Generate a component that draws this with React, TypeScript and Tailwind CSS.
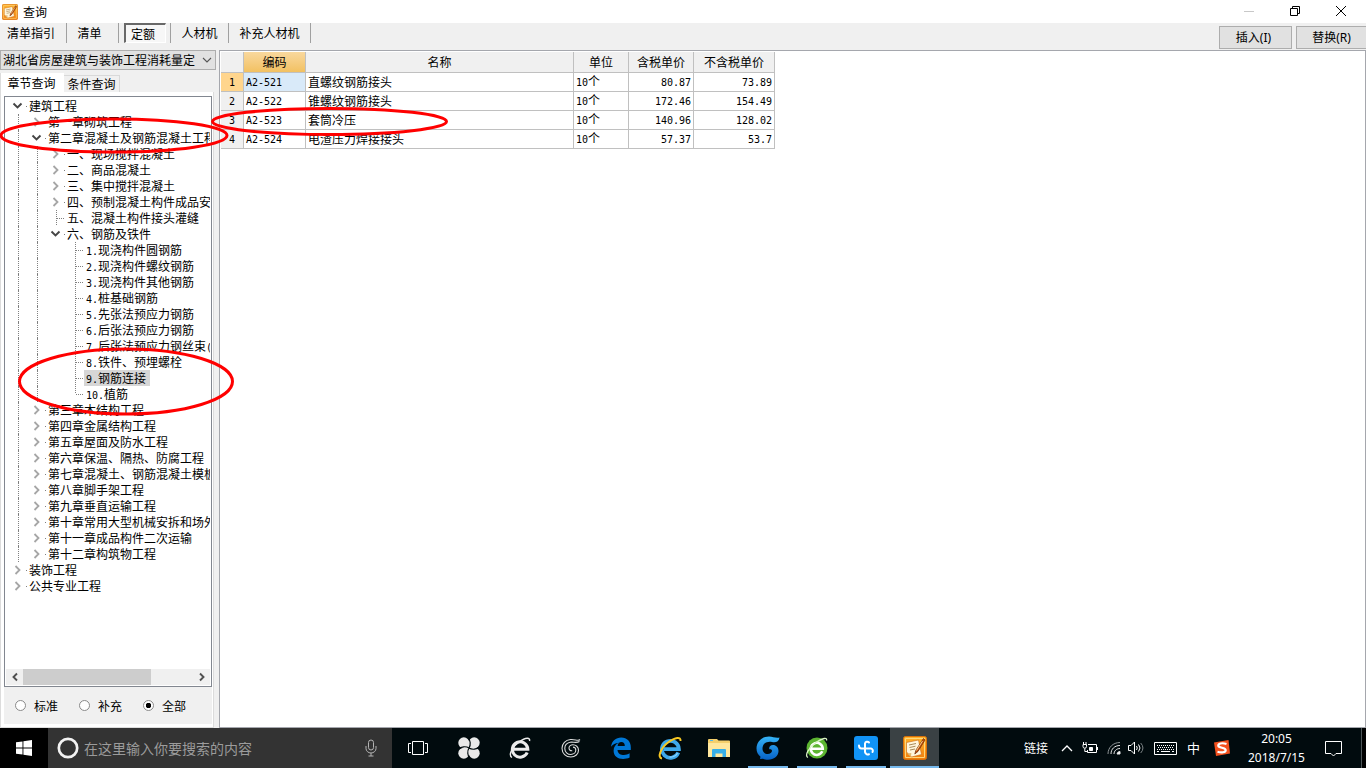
import { useState, type ReactNode } from "react";

type TreeRow = {
  text: string;
  depth: number;
  state: "open" | "closed" | "leaf";
  lines: boolean[];
  last?: boolean;
};

const treeRows: TreeRow[] = [
  { text: "建筑工程", depth: 0, state: "open", lines: [] },
  { text: "第一章砌筑工程", depth: 1, state: "closed", lines: [true] },
  { text: "第二章混凝土及钢筋混凝土工程", depth: 1, state: "open", lines: [true] },
  { text: "一、现场搅拌混凝土", depth: 2, state: "closed", lines: [true, true] },
  { text: "二、商品混凝土", depth: 2, state: "closed", lines: [true, true] },
  { text: "三、集中搅拌混凝土", depth: 2, state: "closed", lines: [true, true] },
  { text: "四、预制混凝土构件成品安", depth: 2, state: "closed", lines: [true, true] },
  { text: "五、混凝土构件接头灌缝", depth: 2, state: "leaf", lines: [true, true] },
  { text: "六、钢筋及铁件", depth: 2, state: "open", lines: [true, true] },
  { text: "1.现浇构件圆钢筋", depth: 3, state: "leaf", lines: [true, true, false] },
  { text: "2.现浇构件螺纹钢筋", depth: 3, state: "leaf", lines: [true, true, false] },
  { text: "3.现浇构件其他钢筋", depth: 3, state: "leaf", lines: [true, true, false] },
  { text: "4.桩基础钢筋", depth: 3, state: "leaf", lines: [true, true, false] },
  { text: "5.先张法预应力钢筋", depth: 3, state: "leaf", lines: [true, true, false] },
  { text: "6.后张法预应力钢筋", depth: 3, state: "leaf", lines: [true, true, false] },
  { text: "7.后张法预应力钢丝束(", depth: 3, state: "leaf", lines: [true, true, false] },
  { text: "8.铁件、预埋螺栓", depth: 3, state: "leaf", lines: [true, true, false] },
  { text: "9.钢筋连接", depth: 3, state: "leaf", lines: [true, true, false] },
  { text: "10.植筋", depth: 3, state: "leaf", lines: [true, true, false], last: true },
  { text: "第三章木结构工程", depth: 1, state: "closed", lines: [true] },
  { text: "第四章金属结构工程", depth: 1, state: "closed", lines: [true] },
  { text: "第五章屋面及防水工程", depth: 1, state: "closed", lines: [true] },
  { text: "第六章保温、隔热、防腐工程", depth: 1, state: "closed", lines: [true] },
  { text: "第七章混凝土、钢筋混凝土模板", depth: 1, state: "closed", lines: [true] },
  { text: "第八章脚手架工程", depth: 1, state: "closed", lines: [true] },
  { text: "第九章垂直运输工程", depth: 1, state: "closed", lines: [true] },
  { text: "第十章常用大型机械安拆和场外", depth: 1, state: "closed", lines: [true] },
  { text: "第十一章成品构件二次运输", depth: 1, state: "closed", lines: [true] },
  { text: "第十二章构筑物工程", depth: 1, state: "closed", lines: [true] },
  { text: "装饰工程", depth: 0, state: "closed", lines: [] },
  { text: "公共专业工程", depth: 0, state: "closed", lines: [] },
];

const quotas = [
  { code: "A2-521", name: "直螺纹钢筋接头", unit: "10个", taxed: "80.87", untaxed: "73.89" },
  { code: "A2-522", name: "锥螺纹钢筋接头", unit: "10个", taxed: "172.46", untaxed: "154.49" },
  { code: "A2-523", name: "套筒冷压", unit: "10个", taxed: "140.96", untaxed: "128.02" },
  { code: "A2-524", name: "电渣压力焊接接头", unit: "10个", taxed: "57.37", untaxed: "53.7" },
];

/* Half-width characters are set in a 6px monospace cell beside 12px ideographs. */
function Mixed({ text }: { text: string }) {
  return (
    <>
      {text.split(/([\x20-\x7e]+)/).map((part, i) =>
        i % 2 === 1 ? (
          <span key={i} className="font-['DejaVu_Sans_Mono',monospace] text-[10px]">
            {part}
          </span>
        ) : (
          part
        ),
      )}
    </>
  );
}

function QuotaIcon({ className }: { className: string }) {
  return (
    <svg viewBox="0 0 24 24" className={className} aria-hidden="true">
      <defs>
        <linearGradient id="quota-bg" x1="0" y1="0" x2="0" y2="1">
          <stop offset="0" stopColor="#ffb52e" />
          <stop offset="1" stopColor="#f07c0c" />
        </linearGradient>
      </defs>
      <rect x="0.5" y="0.5" width="23" height="23" rx="2" fill="url(#quota-bg)" stroke="#d96f08" />
      <path d="M2.5 2.5h19v19h-19z" fill="none" stroke="#ffd67a" />
      <path d="M3.5 6.5l12-2.5 3 14.5-10 2.5-5-5z" fill="#fff6dc" stroke="#c76a12" strokeWidth="0.6" />
      <path d="M6 9l7-1.5M6.5 11.500l6-1.300M7 14l5-1" stroke="#a98a5a" strokeWidth="1" />
      <path d="M8 21l.3-4-4 .4z" fill="#e4b970" />
      <path d="M20.500 2.500L13 14l-1.200 4 3.200-2.600L22 4z" fill="#c2500c" stroke="#6b2a08" strokeWidth="0.7" />
      <path d="M19.500 5l-6 9.500" stroke="#ffe0a0" strokeWidth="0.9" />
    </svg>
  );
}

function TreeItem({ row, selected, onSelect }: { row: TreeRow; selected: boolean; onSelect: () => void }) {
  return (
    <li
      role="treeitem"
      aria-selected={selected}
      aria-expanded={row.state === "leaf" ? undefined : row.state === "open"}
      className="flex h-4 items-stretch whitespace-nowrap"
    >
      {row.lines.map((line, i) => (
        <span key={i} className="flex w-[19px] shrink-0 pl-[10px]">
          {line && <span className="border-l border-dotted border-[#808080]" />}
        </span>
      ))}
      <span className="flex w-[19px] shrink-0 items-center">
        {row.state === "leaf" ? (
          <svg viewBox="0 0 19 16" className="h-4 w-[19px]" aria-hidden="true">
            <path d={row.last ? "M10.5 0v8" : "M10.5 0v16"} stroke="#808080" strokeDasharray="1 1" />
            <path d="M11 8.500h8" stroke="#808080" strokeDasharray="1 1" />
          </svg>
        ) : (
          <svg viewBox="0 0 19 16" className="h-4 w-[19px]" fill="none" aria-hidden="true">
            {row.state === "open" ? (
              <path d="M5.500 5.500l4 4 4-4" stroke="#454545" strokeWidth="1.900" />
            ) : (
              <path d="M7.500 4l4 4-4 4" stroke="#a6a6a6" strokeWidth="1.800" />
            )}
            <path d="M18 8.500h1" stroke="#808080" />
          </svg>
        )}
      </span>
      <button
        type="button"
        onClick={onSelect}
        className={selected ? "bg-[#d6d6d6] pr-1 pl-0.5 leading-4" : "pr-1 pl-0.5 leading-4"}
      >
        <Mixed text={row.text} />
      </button>
    </li>
  );
}

function Toolbar() {
  const item = "flex h-5 items-center justify-center border-r border-[#a0a0a0]";
  return (
    <div className="flex h-[27px] shrink-0 items-start justify-between bg-[#f0f0f0]">
      <div className="flex">
        <button type="button" className={`${item} w-[67px] pr-1`}>清单指引</button>
        <button type="button" className={`${item} w-[52px] pr-1.5`}>清单</button>
        <div className={`${item} w-[52px]`}>
          <button
            type="button"
            aria-pressed="true"
            className="h-5 w-[42px] border-t-2 border-r border-b border-l-2 border-t-[#696969] border-r-white border-b-white border-l-[#696969] bg-[#f7f7f7] pr-1 leading-[17px]"
          >
            定额
          </button>
        </div>
        <button type="button" className={`${item} w-[58px]`}>人材机</button>
        <button type="button" className={`${item} w-[82px]`}>补充人材机</button>
      </div>
      <div className="flex gap-1 pt-[3px]">
        <button type="button" className="h-[23px] w-[73px] border border-[#adadad] bg-[#e1e1e1] pr-1">
          插入<span className="font-['Noto_Sans',sans-serif]">(I)</span>
        </button>
        <button type="button" className="h-[23px] w-[70px] border border-r-0 border-[#adadad] bg-[#e1e1e1]">
          替换<span className="font-['Noto_Sans',sans-serif]">(R)</span>
        </button>
      </div>
    </div>
  );
}

function Sidebar() {
  const [selected, setSelected] = useState("9.钢筋连接");
  return (
    <aside className="flex w-[219px] shrink-0 flex-col bg-[#f0f0f0]">
      <div className="relative w-[216px]">
        <select
          aria-label="定额库"
          className="block h-5 w-full appearance-none border border-[#adadad] bg-[#e1e1e1] pr-4 pl-0.5 leading-[18px]"
        >
          <option>湖北省房屋建筑与装饰工程消耗量定</option>
        </select>
        <svg viewBox="0 0 10 6" className="pointer-events-none absolute top-[7px] right-1 h-1.5 w-2.5" fill="none" aria-hidden="true">
          <path d="M1 1l4 4 4-4" stroke="#555" strokeWidth="1.100" />
        </svg>
      </div>

      <div role="tablist" className="flex items-end pt-[3px]">
        <button type="button" role="tab" aria-selected="true" className="h-[19px] w-16 border-l border-[#dcdcdc] bg-white pr-0.5 leading-[18px]">
          章节查询
        </button>
        <button type="button" role="tab" aria-selected="false" className="h-[17px] w-14 border border-b-0 border-l-0 border-[#d9d9d9] leading-4">
          条件查询
        </button>
      </div>

      <div className="flex w-[214px] flex-1 flex-col border border-t-0 border-[#dcdcdc] bg-white pt-1 pr-px pb-[3px] pl-[3px]">
        <div className="flex flex-1 flex-col border border-[#828790] bg-white p-px">
          <ul role="tree" aria-label="章节" className="flex-1 overflow-hidden pl-0.5">
            {treeRows.map((row) => (
              <TreeItem key={row.text} row={row} selected={row.text === selected} onSelect={() => setSelected(row.text)} />
            ))}
          </ul>
          <div className="flex h-4 items-stretch bg-[#f0f0f0]">
            <button type="button" aria-label="向左滚动" className="flex w-[17px] items-center justify-center">
              <svg viewBox="0 0 8 10" className="h-2.5 w-2" fill="none"><path d="M6 1.500L2.500 5 6 8.500" stroke="#505050" strokeWidth="1.900" /></svg>
            </button>
            <div className="flex flex-1">
              <div className="w-3/4 bg-[#cdcdcd]" />
            </div>
            <button type="button" aria-label="向右滚动" className="flex w-[17px] items-center justify-center">
              <svg viewBox="0 0 8 10" className="h-2.5 w-2" fill="none"><path d="M2 1.500L5.500 5 2 8.500" stroke="#505050" strokeWidth="1.900" /></svg>
            </button>
          </div>
        </div>
        <div role="radiogroup" aria-label="定额范围" className="flex h-[37px] items-center bg-[#f0f0f0] pl-[11px]">
          {["标准", "补充", "全部"].map((name) => (
            <label key={name} className="flex w-16 items-center gap-2">
              <input
                type="radio"
                name="scope"
                defaultChecked={name === "全部"}
                className="size-[11px] appearance-none rounded-full border border-[#8a8a8a] bg-white checked:bg-[radial-gradient(circle,#000_2.5px,transparent_3px)]"
              />
              {name}
            </label>
          ))}
        </div>
      </div>
    </aside>
  );
}

function QuotaTable() {
  const head = "border-r border-b border-[#c0c0c0] p-0 font-normal";
  const cell = "border-r border-b border-[#c0c0c0] px-0.5 py-0";
  return (
    <table className="w-[554px] table-fixed border-separate border-spacing-0">
      <colgroup>
        <col className="w-[23px]" />
        <col className="w-[62px]" />
        <col className="w-[268px]" />
        <col className="w-[55px]" />
        <col className="w-[65px]" />
        <col className="w-[81px]" />
      </colgroup>
      <thead>
        <tr className="h-[21px] bg-[#f0f0f0]">
          <th className={head} aria-label="序号" />
          <th className={`${head} bg-linear-to-b from-[#f9d89d] to-[#f2c161]`}>编码</th>
          <th className={head}>名称</th>
          <th className={head}>单位</th>
          <th className={head}>含税单价</th>
          <th className={head}>不含税单价</th>
        </tr>
      </thead>
      <tbody>
        {quotas.map((q, i) => (
          <tr key={q.code} className="h-[19px] leading-[14px]">
            <th scope="row" className={`${head} ${i === 0 ? "bg-[#ffd58d]" : "bg-[#f0f0f0]"}`}>
              <Mixed text={String(i + 1)} />
            </th>
            <td className={`${cell} ${i === 0 ? "bg-[#d9eaf9]" : ""}`}><Mixed text={q.code} /></td>
            <td className={cell}>{q.name}</td>
            <td className={cell}><Mixed text={q.unit} /></td>
            <td className={`${cell} text-right`}><Mixed text={q.taxed} /></td>
            <td className={`${cell} text-right`}><Mixed text={q.untaxed} /></td>
          </tr>
        ))}
      </tbody>
    </table>
  );
}

function PinnedApp({ label, children }: { label: string; children: ReactNode }) {
  return (
    <button type="button" aria-label={label} className="flex h-10 w-[51px] items-center justify-center">
      {children}
    </button>
  );
}

function RunningApp({ label, running, active, children }: { label: string; running?: boolean; active?: boolean; children: ReactNode }) {
  return (
    <button
      type="button"
      aria-label={label}
      className={`flex h-10 w-[49px] flex-col items-center ${active ? "bg-[#3a4144]" : ""}`}
    >
      <span className="flex flex-1 items-center pt-0.5">{children}</span>
      <span className={`h-0.5 ${active ? "w-full" : "w-10"} ${running ? "bg-[#76b9ed]" : ""}`} />
    </button>
  );
}

function Taskbar() {
  return (
    <footer className="flex h-10 shrink-0 bg-[#010b0e] text-white">
      <button type="button" aria-label="开始" className="flex w-12 items-center justify-center bg-black">
        <svg viewBox="0 0 16 16" className="size-4" fill="#fff">
          <path d="M0 2.300L6.500 1.400v6.100H0zM7.400 1.250L16 0v7.500H7.400zM0 8.400h6.500v6.200L0 13.700zM7.400 8.400H16V16l-8.600-1.200z" />
        </svg>
      </button>
      <label className="flex w-[344px] items-center bg-[#333333] pr-[14px] pl-[9px]">
        <svg viewBox="0 0 22 22" className="size-[22px] shrink-0" fill="none" aria-hidden="true">
          <circle cx="11" cy="11" r="9.200" stroke="#f2f2f2" strokeWidth="2.700" />
        </svg>
        <input
          type="text"
          aria-label="搜索"
          placeholder="在这里输入你要搜索的内容"
          className="ml-[5px] min-w-0 flex-1 bg-transparent text-sm outline-none placeholder:text-[#9b9b9b]"
        />
        <svg viewBox="0 0 14 18" className="h-[18px] w-3.5 shrink-0" fill="none" stroke="#b4b4b4" aria-hidden="true">
          <rect x="4.500" y="1" width="5" height="10" rx="2.500" />
          <path d="M2 7v2.500a5 4.500 0 0 0 10 0V7M7 14v3M4.500 17h5" />
        </svg>
      </label>

      <div className="flex">
        <PinnedApp label="任务视图">
          <svg viewBox="0 0 20 14" className="h-3.5 w-5" fill="none" stroke="#fff">
            <path d="M4.500 .5h11v13h-11zM3 2.500H.5v9H3M17 2.500h2.500v9H17" />
          </svg>
        </PinnedApp>
        <PinnedApp label="风车浏览器">
          <svg viewBox="0 0 22 22" className="size-[22px]" fill="#e9e9e9">
            <circle cx="5.800" cy="5.800" r="5.500" />
            <circle cx="16.200" cy="5.800" r="5.500" />
            <circle cx="5.800" cy="16.200" r="5.500" />
            <circle cx="16.200" cy="16.200" r="5.500" />
            <path d="M6 5h10v12H6z" />
            <path d="M11 11C13 8 12.500 3 10 .5M11 11C9 14 9.500 19 12 21.500M11 11C8 9 3 9.500 .5 12M11 11c3 2 8 1.500 10.500-1" fill="none" stroke="#010b0e" strokeWidth="1.200" />
          </svg>
        </PinnedApp>
        <PinnedApp label="浏览器">
          <svg viewBox="0 0 22 22" className="size-[22px]" fill="none">
            <path d="M18.200 15.500a7.700 7.700 0 1 1 .6-3.300H5" stroke="#ececec" strokeWidth="3.100" />
            <path d="M3 20.500C-1 18 3 10 10 5S21.500.500 20.500 4" stroke="#ececec" strokeWidth="1.400" />
          </svg>
        </PinnedApp>
        <PinnedApp label="广联达">
          <svg viewBox="0 0 20 20" className="size-5" fill="none" stroke="#dcdcdc" strokeWidth="1.100">
            <path d="M19 1.500C17 3.500 14 1 9.500 1.500 4.500 2 1 5.500 1 10.300 1 15.500 5 19 9.800 19c4.500 0 7.700-3 7.700-6.800 0-3.400-2.700-5.400-5.500-5.400-2.200 0-4 1.500-4 3.300 0 1.800 1.500 3 3.200 2.500" />
            <path d="M18.500 3.500C15 5.500 12 3.500 9 4.300 6 5 3.800 7.500 3.800 10.500c0 3.500 2.700 6 6 6 3 0 5-2 5-4.400 0-1.800-1.200-3-2.800-3" />
          </svg>
        </PinnedApp>

        <RunningApp label="Edge">
          <svg viewBox="0 0 20 22" className="h-[22px] w-5" fill="#0078d7">
            <path d="M0 9.700C.8 4 4.800.5 10.200.5c6 0 9.600 4.300 9.600 9.800v2.600H6.500c.2 3.700 3.400 5 6.400 5 2.200 0 4-.6 5.700-1.600v4.300c-1.900 1-4.200 1.400-6.500 1.400C6.500 22 2.600 19 2.600 13.800c0-3.800 2-6.500 5.200-8C4.300 6.200 1.700 7.500 0 9.700zm6.600-.8h7.200c0-2.400-1.200-3.900-3.500-3.900-2 0-3.400 1.500-3.700 3.900z" />
          </svg>
        </RunningApp>
        <RunningApp label="Internet Explorer">
          <svg viewBox="0 0 24 24" className="size-6" fill="none">
            <path d="M20.300 16.500a8.500 8.500 0 1 1 .6-3.300H6" stroke="#3fa9ea" strokeWidth="3.800" />
            <path d="M19.500 17a8 8 0 0 1-8 4" stroke="#8bd3ff" strokeWidth="1.200" />
            <path d="M4 22.500C-1 22 2.500 12 10 6.500S23 .500 22.500 5" stroke="#f8c822" strokeWidth="2" />
          </svg>
        </RunningApp>
        <RunningApp label="文件资源管理器">
          <svg viewBox="0 0 22 18" className="h-[18px] w-[22px]">
            <path d="M1 0h8l1.500 1.500H21a1 1 0 0 1 1 1V18H0V1a1 1 0 0 1 1-1z" fill="#f4cf6c" />
            <path d="M0 4h22v14H0z" fill="#ffe79d" />
            <path d="M2 1h3v1H2z" fill="#55b9e8" />
            <path d="M4 18V11a1 1 0 0 1 1-1h12a1 1 0 0 1 1 1v7h-3.500v-3.500h-7V18z" fill="#36aee8" />
          </svg>
        </RunningApp>
        <RunningApp label="广联达计价" running>
          <svg viewBox="0 0 24 24" className="size-6">
            <defs>
              <linearGradient id="wave-bg" x1="0" y1="0" x2="0" y2="1">
                <stop offset="0" stopColor="#35b4f6" />
                <stop offset="1" stopColor="#0662c8" />
              </linearGradient>
            </defs>
            <path d="M23.500 1.500c-.6 4-3.500 5.500-7.500 4.600C10.500 5 6.500 8 6.500 12.500c0 3.500 2.300 5.500 5.200 5.500 2.500 0 4.300-1.300 4.300-3.200 0-1.400-1.300-2-2.600-1.500-.9-2 .8-4.300 3.600-4.300 3.200 0 5.500 2.500 5.500 6 0 5-4.500 8.700-10.500 8.700-2 0-3.600-.3-5-1l-3 .3.500-2.200C2 18.800.5 15.800.5 12.500.5 5.500 6 .5 13 .5c4 0 7 2 10.500 1z" fill="url(#wave-bg)" />
          </svg>
        </RunningApp>
        <RunningApp label="360浏览器" running>
          <svg viewBox="0 0 24 24" className="size-6" fill="none">
            <circle cx="12" cy="12" r="10.500" fill="#5cb531" />
            <path d="M17.300 15.300a6 6 0 1 1 .5-2.500H7" stroke="#fff" strokeWidth="2.500" />
            <path d="M3 21.500C-1 20 4 11 11 6.500S22.500 1 21.500 4.500" stroke="#d9f3c4" strokeWidth="1.300" />
          </svg>
        </RunningApp>
        <RunningApp label="云计价平台" running>
          <svg viewBox="0 0 24 24" className="size-6" fill="none">
            <rect width="24" height="24" rx="3" fill="#1193f5" />
            <path d="M15 6.500a2.300 2.300 0 0 0-4 1V16a3 3 0 0 0 4 2.200M5 9.500c0 2 1 3 2.500 3H17a2.300 2.300 0 0 1 1.500 3.500" stroke="#fff" strokeWidth="2" strokeLinecap="round" />
          </svg>
        </RunningApp>
        <RunningApp label="查询" running active>
          <QuotaIcon className="size-6" />
        </RunningApp>
      </div>

      <div className="ml-auto flex items-center">
        <span className="w-[33px]">链接</span>
        <button type="button" aria-label="显示隐藏的图标" className="flex w-[19px] justify-center">
          <svg viewBox="0 0 12 8" className="h-2 w-3" fill="none"><path d="M1 7l5-5 5 5" stroke="#fff" strokeWidth="1.300" /></svg>
        </button>
        <svg viewBox="0 0 16 12" className="ml-1.5 h-3 w-4" fill="none" stroke="#fff" aria-hidden="true">
          <path d="M6 2.500h8.500v8H5.500V8M15.500 5v3M1 2.500h3.500v2a1.700 1.700 0 0 1-3.500 0zM1.500 0v2.500M4 0v2.500M2.800 6.500v3H5" />
          <path d="M7.500 5.500h3v3h-3z" fill="#fff" />
        </svg>
        <svg viewBox="0 0 14 14" className="ml-[9px] size-3.5" fill="none" stroke="#e8e8e8" aria-hidden="true">
          <path d="M1 13C1 6.500 6 1.500 13 1.500" stroke="#8e9496" />
          <path d="M4 13c0-5 3.500-8.500 9-8.500M7 13c0-3 2.500-5.500 6-5.500" />
          <path d="M10 13a3 3 0 0 1 3-2.500V13z" fill="#fff" />
        </svg>
        <svg viewBox="0 0 17 14" className="ml-[7px] h-3.5 w-[17px]" fill="none" stroke="#fff" aria-hidden="true">
          <path d="M.5 4.500h2.500L6.500 1v12L3 9.500H.5zM8.500 5q1.500 2 0 4" />
          <path d="M10.500 3.500q3 3.500 0 7" />
          <path d="M12.700 2q4.500 5 0 10" stroke="#7d8486" />
        </svg>
        <svg viewBox="0 0 23 13" className="ml-[9px] h-[13px] w-[23px]" fill="none" stroke="#fff" aria-hidden="true">
          <path d="M.5.5h22v12H.5z" />
          <path d="M3 3.500h17M4 5.500h16M3 7.500h17" strokeDasharray="1 1" />
          <path d="M3 9.500h2M7 9.500h9M18 9.500h2" />
        </svg>
        <span className="ml-[10px] w-[14px] text-[13px]">中</span>
        <svg viewBox="0 0 16 16" className="ml-[13px] size-4" fill="none" aria-hidden="true">
          <path d="M0 2.500L14.500 0 16 13.500 2 16z" fill="#f4511e" />
          <path d="M12.500 4C8 2.500 4 3.500 4.300 5.800c.4 2.400 7.200 1.500 7.400 4.200.1 2.500-4.200 3-8.200 1.800" stroke="#fff" strokeWidth="2.200" />
        </svg>
        <div className="ml-4 w-[61px] text-center font-['Noto_Sans',sans-serif] leading-[19px]">
          <div>20:05</div>
          <div>2018/7/15</div>
        </div>
        <button type="button" aria-label="通知中心" className="ml-[17px] flex w-[18px] justify-center">
          <svg viewBox="0 0 17 17" className="size-[17px]" fill="none" stroke="#fff">
            <path d="M.5 1.500h16v12H11l-2.500 2.500L6 13.500H.5z" />
          </svg>
        </button>
        <span className="ml-[19px] h-10 w-[5px] border-l border-[#4d5557] bg-black" />
      </div>
    </footer>
  );
}

export default function App() {
  return (
    <div className="relative flex min-h-screen flex-col bg-white font-['Noto_Sans_CJK_SC',sans-serif] text-xs text-black">
      <header className="flex h-[23px] shrink-0 items-center justify-between bg-white pl-0.5">
        <div className="flex items-center gap-[5px]">
          <QuotaIcon className="size-4" />
          <h1>查询</h1>
        </div>
        <div className="flex h-full items-center pr-0.5 pb-0.5">
          <button type="button" aria-label="最小化" className="flex w-[46px] justify-center">
            <svg viewBox="0 0 10 10" className="size-2.5"><path d="M0 5.500h10" stroke="#c8c8c8" /></svg>
          </button>
          <button type="button" aria-label="还原" className="flex w-[46px] justify-center">
            <svg viewBox="0 0 10 10" className="size-2.5" fill="none" stroke="#000"><path d="M.5 2.500h7v7h-7zM2.500 2V.5h7v7H8" /></svg>
          </button>
          <button type="button" aria-label="关闭" className="flex w-[46px] justify-center">
            <svg viewBox="0 0 10 10" className="size-2.5" fill="none" stroke="#000"><path d="M0 0l10 10M10 0L0 10" /></svg>
          </button>
        </div>
      </header>
      <Toolbar />
      <div className="flex flex-1">
        <Sidebar />
        <main className="min-w-0 flex-1 border border-[#a5a7ad] bg-white pt-px pl-px">
          <QuotaTable />
        </main>
      </div>
      <Taskbar />

      <svg viewBox="0 0 460 420" className="pointer-events-none absolute top-0 left-0 h-[420px] w-[460px]" fill="none" stroke="#f00" strokeWidth="3" aria-hidden="true">
        <ellipse cx="114" cy="135.500" rx="113" ry="16.500" />
        <ellipse cx="126" cy="381.500" rx="106.500" ry="32.500" />
        <ellipse cx="329.500" cy="121.500" rx="117" ry="13" />
      </svg>
    </div>
  );
}
